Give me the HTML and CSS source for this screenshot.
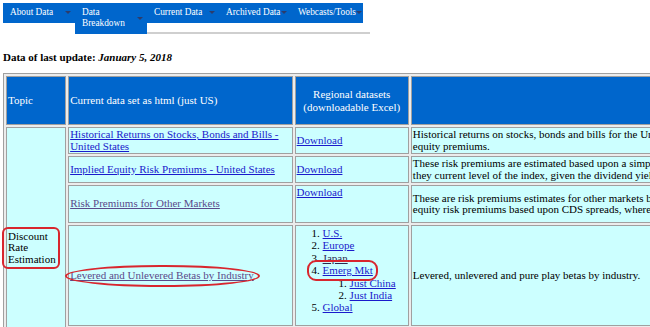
FILE: index.html
```html
<!DOCTYPE html>
<html lang="en">
<head>
<meta charset="UTF-8">
<meta name="viewport" content="width=device-width, initial-scale=1.0">
<title>Damodaran Online: Data</title>
<link rel="stylesheet" href="styles.css">
</head>
<body>
<nav class="menu-bar">
    <ul class="menu">
        <li><span>About Data</span><i class="arrow"></i></li>
        <li><span>Data<br>Breakdown</span><i class="arrow"></i></li>
        <li><span>Current Data</span><i class="arrow"></i></li>
        <li><span>Archived Data</span><i class="arrow"></i></li>
        <li><span>Webcasts/Tools</span><i class="arrow"></i></li>
    </ul>
</nav>

<h4 class="update-line">Data of last update: <em>January 5, 2018</em></h4>

<table class="data-table">
    <colgroup>
        <col class="col-topic">
        <col class="col-html">
        <col class="col-region">
        <col class="col-desc">
    </colgroup>
    <tr class="head-row">
        <th>Topic</th>
        <th>Current data set as html (just US)</th>
        <th class="center">Regional datasets<br>(downloadable Excel)</th>
        <th></th>
    </tr>
    <tr>
        <td rowspan="5"><span class="marked marked-box">Discount Rate Estimation</span></td>
        <td><a href="#">Historical Returns on Stocks, Bonds and Bills - United States</a></td>
        <td><a href="#">Download</a></td>
        <td class="desc">Historical returns on stocks, bonds and bills for the United States, updated every year, with the implied<br>equity premiums.</td>
    </tr>
    <tr>
        <td><a href="#">Implied Equity Risk Premiums - United States</a></td>
        <td><a href="#">Download</a></td>
        <td class="desc">These risk premiums are estimated based upon a simple dividend discount model, backing out the rate that<br>they current level of the index, given the dividend yield and expected growth.</td>
    </tr>
    <tr class="row-markets">
        <td><a href="#" class="seen">Risk Premiums for Other Markets</a></td>
        <td class="top"><a href="#">Download</a></td>
        <td class="desc">These are risk premiums estimates for other markets based upon country ratings, with<br>equity risk premiums based upon CDS spreads, where available.</td>
    </tr>
    <tr class="row-betas">
        <td><span class="marked marked-oval"><a href="#" class="seen">Levered and Unlevered Betas by Industry</a></span></td>
        <td class="top">
            <ol class="regions">
                <li><a href="#">U.S. </a></li>
                <li><a href="#">Europe</a></li>
                <li><a href="#" class="dark">Japan</a></li>
                <li><span class="marked marked-item"><a href="#">Emerg Mkt</a></span>
                    <ol>
                        <li><a href="#">Just China</a></li>
                        <li><a href="#">Just India</a></li>
                    </ol>
                </li>
                <li><a href="#">Global </a></li>
            </ol>
        </td>
        <td class="desc">Levered, unlevered and pure play betas by industry.</td>
    </tr>
    <tr class="row-next">
        <td><a href="#">Cost of Capital by Industry</a></td>
        <td><a href="#">Download</a></td>
        <td class="desc">Cost of equity and capital, by industry.</td>
    </tr>
</table>
</body>
</html>
```

FILE: styles.css
```css
html, body {
    overflow: hidden;
}

body {
    margin: 0;
    padding: 3px;
    font-family: "Liberation Serif", "Times New Roman", serif;
    font-size: 11px;
    color: #000;
    background: #fff;
}

a {
    color: #1a1acc;
}

a.seen {
    color: #5a4a8a;
}

a.dark {
    color: #2b2b50;
}

/* top menu */
.menu {
    list-style: none;
    margin: 0;
    padding: 0;
    width: 367px;
    display: flex;
    align-items: flex-start;
    background: linear-gradient(#cfcfcf, #cfcfcf) no-repeat 144px 100% / 223px 2px;
}

.menu li {
    width: 72px;
    box-sizing: border-box;
    padding: 4px 4px 5px 7px;
    display: flex;
    align-items: center;
    justify-content: space-between;
    background: #0066cc;
    color: #fff;
    font-size: 9.3px;
    line-height: 11px;
}

.arrow {
    width: 0;
    height: 0;
    border-left: 3px solid transparent;
    border-right: 3px solid transparent;
    border-top: 3px solid #2c3c6c;
}

.update-line {
    margin: 17px 0 10px;
    font-size: 11px;
    line-height: 12px;
}

/* data table */
.data-table {
    width: 912px;
    table-layout: fixed;
    border: 1px solid #a0a0a0;
    border-spacing: 2px;
    background: #ececec;
    line-height: 11.5px;
}

.col-topic { width: 60px; }
.col-html { width: 224px; }
.col-region { width: 114px; }
.col-desc { width: 500px; }

.data-table th,
.data-table td {
    box-sizing: border-box;
    border: 1px solid #a0a0a0;
    padding: 1px;
    vertical-align: middle;
    text-align: left;
    font-weight: normal;
}

.data-table th {
    background: #0066cc;
    color: #fff;
    line-height: 13px;
}

.data-table td {
    background: #ccffff;
}

.data-table .center {
    text-align: center;
}

.data-table .top {
    vertical-align: top;
}

.head-row {
    height: 49px;
}

.desc {
    white-space: nowrap;
}

.row-markets {
    height: 38px;
}

.row-betas {
    height: 100px;
}

.row-next {
    height: 41px;
}

.regions {
    margin: 0 0 10px;
    padding-left: 26px;
    line-height: 12.4px;
}

.regions ol {
    margin: 0;
    padding-left: 27px;
}

/* red hand-drawn marks */
.marked {
    position: relative;
    display: inline-block;
}

.marked::after {
    content: "";
    position: absolute;
    border: 2px solid #d8262e;
}

.marked-box::after {
    top: -4px;
    bottom: -4px;
    left: -6px;
    right: 4px;
    border-radius: 6px;
}

.marked-oval::after {
    top: -5px;
    bottom: -6px;
    left: -5px;
    right: -6px;
    border-radius: 50%;
}

.marked-item::after {
    top: -4px;
    bottom: -4px;
    left: -16px;
    right: -5px;
    border-radius: 9px;
}
```
